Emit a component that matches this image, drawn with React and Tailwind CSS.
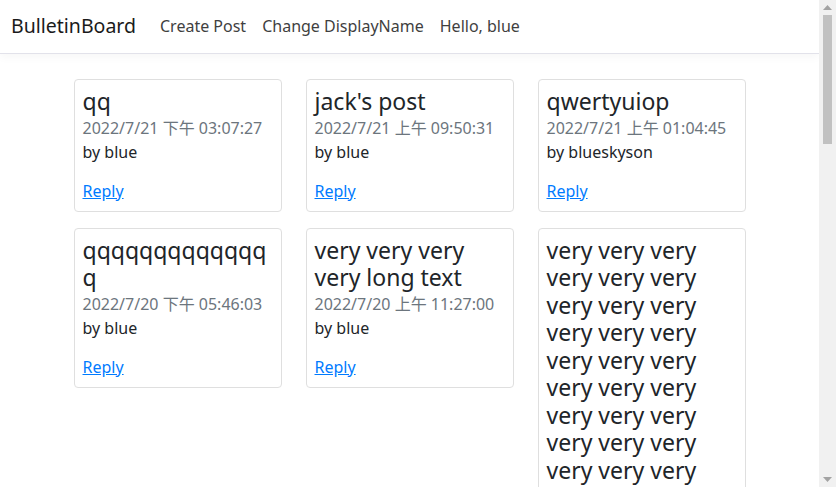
const posts = [
  { title: 'qq', date: '2022/7/21 下午 03:07:27', author: 'blue' },
  { title: "jack's post", date: '2022/7/21 上午 09:50:31', author: 'blue' },
  { title: 'qwertyuiop', date: '2022/7/21 上午 01:04:45', author: 'blueskyson' },
  { title: 'qqqqqqqqqqqqqq', date: '2022/7/20 下午 05:46:03', author: 'blue' },
  { title: 'very very very very long text', date: '2022/7/20 上午 11:27:00', author: 'blue' },
  { title: Array(12).fill('very very very').join(' '), date: '2022/7/20 上午 10:12:44', author: 'blue' },
];

function PostCard({ post }) {
  return (
    <div className="bg-white border border-[#dfdfdf] rounded-[4px] p-2">
      <h4 className="text-[23px] leading-[27.5px] text-[#212529] break-words">{post.title}</h4>
      <div className="text-base leading-6 text-[#6c757d]">{post.date}</div>
      <p className="text-base leading-6 text-[#212529] mb-[15px]">by {post.author}</p>
      <a href="#" className="text-base leading-6 text-[#007bff] underline">Reply</a>
    </div>
  );
}

function Scrollbar() {
  return (
    <div className="w-[17px] h-full bg-[#f1f1f1] flex flex-col items-center shrink-0">
      <div className="h-[15px] w-full flex items-center justify-center">
        <svg width="9" height="5" viewBox="0 0 9 5"><path d="M0 5 L4.5 0 L9 5 Z" fill="#a3a3a3" /></svg>
      </div>
      <div className="w-[9px] h-[129px] bg-[#c1c1c1]" />
      <div className="flex-1" />
      <div className="h-[15px] w-full flex items-center justify-center">
        <svg width="9" height="5" viewBox="0 0 9 5"><path d="M0 0 L9 0 L4.5 5 Z" fill="#a3a3a3" /></svg>
      </div>
    </div>
  );
}

export default function App() {
  return (
    <div className="flex h-[487px] w-[836px] overflow-hidden bg-white" style={{ fontFamily: '"Noto Sans", "Noto Sans CJK TC", sans-serif' }}>
      <div className="flex-1 flex flex-col overflow-hidden">
        {/* Navbar */}
        <nav className="h-[54px] shrink-0 flex items-center px-[11px] pb-[2px] border-b border-[#e2e2ea] shadow-[0_4px_8px_rgba(0,0,0,0.03)]">
          <a href="#" className="text-[19.5px] text-[#1a1a1a] mr-4">BulletinBoard</a>
          <a href="#" className="px-2 text-base text-[#3f3f3f]">Create Post</a>
          <a href="#" className="px-2 text-base text-[#3f3f3f]">Change DisplayName</a>
          <span className="px-2 text-base text-[#3f3f3f]">Hello, blue</span>
        </nav>

        {/* Posts */}
        <main className="pt-[25px]">
          <div className="mx-auto w-[672px] grid grid-cols-3 gap-x-6 gap-y-4 items-start">
            {posts.map((post, i) => (
              <PostCard key={i} post={post} />
            ))}
          </div>
        </main>
      </div>
      <Scrollbar />
    </div>
  );
}
